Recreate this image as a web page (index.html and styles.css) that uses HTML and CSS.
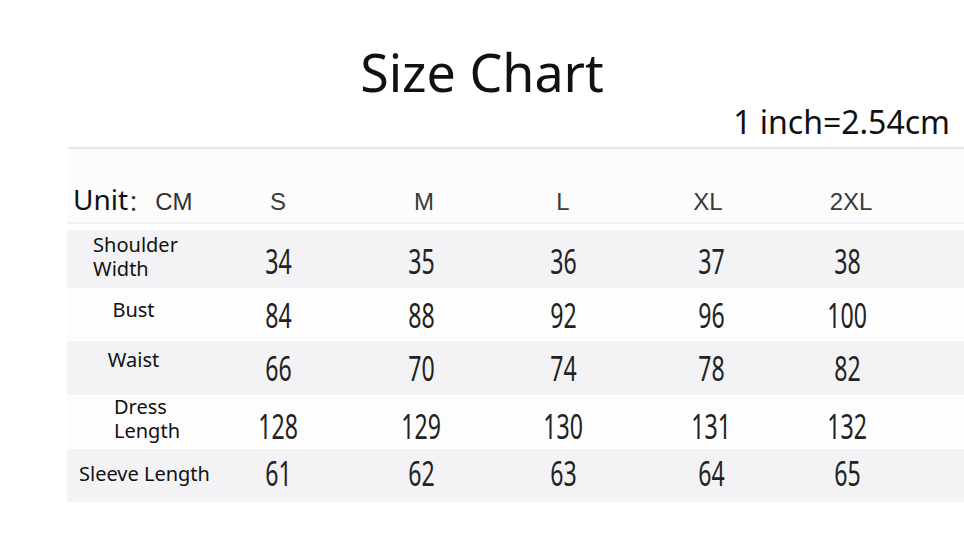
FILE: index.html
```html
<!DOCTYPE html>
<html>
<head>
<meta charset="utf-8">
<link rel="stylesheet" href="styles.css">
</head>
<body>
<div class="page">
  <h1 class="title">Size Chart</h1>
  <div class="conv">1 inch=2.54cm</div>
  <div class="divider"></div>
  <div class="table">
    <div class="row head">
      <div class="unit"><span class="unit-word">Unit</span><span class="unit-colon">：</span><span class="unit-cm">CM</span></div>
      <div class="size">S</div>
      <div class="size size--m">M</div>
      <div class="size">L</div>
      <div class="size size--xl">XL</div>
      <div class="size size--2xl">2XL</div>
    </div>
    <div class="row gray r1">
      <div class="label"><span>Shoulder<br>Width</span></div>
      <div class="val"><span>34</span></div>
      <div class="val"><span>35</span></div>
      <div class="val"><span>36</span></div>
      <div class="val"><span>37</span></div>
      <div class="val"><span>38</span></div>
    </div>
    <div class="row white r2">
      <div class="label"><span>Bust</span></div>
      <div class="val"><span>84</span></div>
      <div class="val"><span>88</span></div>
      <div class="val"><span>92</span></div>
      <div class="val"><span>96</span></div>
      <div class="val"><span>100</span></div>
    </div>
    <div class="row gray r3">
      <div class="label"><span>Waist</span></div>
      <div class="val"><span>66</span></div>
      <div class="val"><span>70</span></div>
      <div class="val"><span>74</span></div>
      <div class="val"><span>78</span></div>
      <div class="val"><span>82</span></div>
    </div>
    <div class="row white r4">
      <div class="label"><span>Dress<br>Length</span></div>
      <div class="val"><span>128</span></div>
      <div class="val"><span>129</span></div>
      <div class="val"><span>130</span></div>
      <div class="val"><span>131</span></div>
      <div class="val"><span>132</span></div>
    </div>
    <div class="row gray r5">
      <div class="label"><span>Sleeve Length</span></div>
      <div class="val"><span>61</span></div>
      <div class="val"><span>62</span></div>
      <div class="val"><span>63</span></div>
      <div class="val"><span>64</span></div>
      <div class="val"><span>65</span></div>
    </div>
  </div>
</div>
</body>
</html>
```
FILE: styles.css
```css
html, body {
  margin: 0;
  padding: 0;
  background: #ffffff;
}
.page {
  width: 964px;
  height: 533px;
  overflow: hidden;
  font-family: "Noto Sans", "Open Sans", sans-serif;
  color: #111;
}
.title {
  margin: 0;
  padding-top: 42px;
  font-weight: 400;
  font-size: 52px;
  line-height: 60px;
  text-align: center;
  color: #111;
}
.conv {
  font-size: 32px;
  line-height: 36px;
  padding-top: 2px;
  text-align: right;
  padding-right: 14px;
  color: #111;
}
.divider {
  margin: 7px 0 0 68px;
  height: 2px;
  background: #e7e7e9;
}
.table {
  margin-left: 67px;
}
.row {
  display: grid;
  grid-template-columns: 140px 142px 144px 140px 156px 116px 1fr;
}
.head {
  height: 73px;
  align-items: baseline;
  background: #fcfcfc;
  border-bottom: 2px solid #f1f1f3;
  margin-bottom: 6px;
}
.unit {
  padding-top: 34px;
  padding-left: 6px;
  white-space: nowrap;
}
.unit-word {
  font-size: 28px;
  line-height: 32px;
  color: #111;
}
.unit-colon {
  font-family: "Noto Sans CJK SC", sans-serif;
  font-size: 22px;
  color: #333;
}
.unit-cm {
  font-family: "Liberation Sans", Arial, sans-serif;
  font-size: 24px;
  color: #333;
  margin-left: 5px;
}
.size {
  font-family: "Liberation Sans", Arial, sans-serif;
  font-size: 24px;
  color: #3a3a3a;
  text-align: center;
}
.size--m { padding-left: 6px; }
.size--xl { padding-right: 6px; }
.size--2xl { padding-left: 8px; }
.gray { background: #f3f3f5; }
.white { background: #fdfdfd; }
.r1 { height: 58px; }
.r2 { height: 53px; }
.r3 { height: 54px; }
.r4 { height: 54px; }
.r5 { height: 53px; }
.row.gray, .row.white {
  align-items: center;
}
.label {
  text-align: center;
  font-size: 20px;
  line-height: 24px;
  color: #111;
  white-space: nowrap;
  padding-right: 7px;
}
.label span {
  display: inline-block;
  text-align: left;
}
.r1 .label { padding-bottom: 4px; padding-right: 3px; }
.r2 .label { padding-bottom: 10px; }
.r3 .label { padding-bottom: 16px; }
.r4 .label { padding-bottom: 14px; padding-left: 20px; padding-right: 0; }
.r5 .label { padding-bottom: 3px; padding-left: 12px; padding-right: 0; text-align: left; }
.val {
  text-align: center;
  font-size: 34px;
  line-height: 34px;
  color: #222;
}
.val span {
  display: inline-block;
  transform: scaleX(0.68);
}
.r1 .val { padding-top: 4px; }
.r5 .val { padding-bottom: 6px; }
```
